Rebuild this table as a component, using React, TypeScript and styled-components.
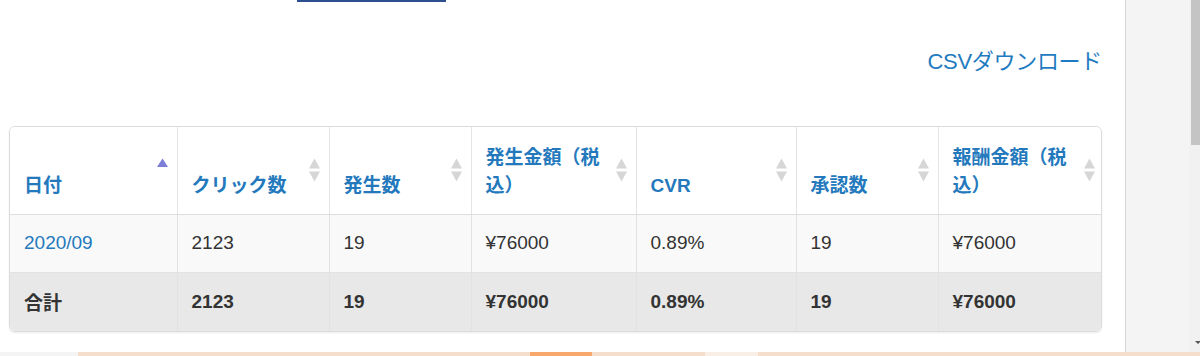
import React from "react";
import styled, { createGlobalStyle } from "styled-components";

const GlobalStyle = createGlobalStyle`
  html, body {
    margin: 0;
    padding: 0;
    background: #ffffff;
    overflow: hidden;
  }
  body {
    font-family: "Liberation Sans", Arial, "Noto Sans CJK JP", sans-serif;
    color: #333333;
  }
`;

const Page = styled.div`
  width: 1200px;
  height: 356px;
  display: flex;
  flex-direction: column;
`;

const Upper = styled.div`
  flex: 1;
  display: flex;
  min-height: 0;
`;

const Main = styled.div`
  width: 1126px;
  box-sizing: border-box;
  border-right: 1px solid #d6d6d6;
  padding: 0 23px 0 9px;
  display: flex;
  flex-direction: column;
`;

const TabLine = styled.div`
  margin-left: 288px;
  width: 149px;
  height: 2px;
  background: #2c4f8f;
`;

const CsvRow = styled.div`
  display: flex;
  justify-content: flex-end;
  margin-top: 43px;
  height: 28px;
  align-items: center;
`;

const CsvLink = styled.a`
  font-family: "Liberation Sans", Arial, "Noto Sans CJK JP", sans-serif;
  font-size: 22px;
  color: #1f7bc1;
  text-decoration: none;
  letter-spacing: -0.3px;
`;

const TableBox = styled.div`
  margin-top: 53px;
  border: 1px solid #dcdcdc;
  border-radius: 6px;
  overflow: hidden;
  box-shadow: 0 1px 2px rgba(0, 0, 0, 0.08);
`;

const Table = styled.table`
  width: 100%;
  table-layout: fixed;
  border-collapse: collapse;
`;

const Th = styled.th`
  position: relative;
  height: 87px;
  box-sizing: border-box;
  padding: 0 32px 14px 14px;
  text-align: left;
  vertical-align: bottom;
  font-family: "Liberation Sans", Arial, "Noto Sans CJK JP", sans-serif;
  font-size: 19px;
  line-height: 28px;
  font-weight: bold;
  color: #2479bd;
  background: #ffffff;
  border-left: 1px solid #e4e4e4;
  border-bottom: 1px solid #dedede;
  &:first-child {
    border-left: none;
  }
`;

const SortIcon = styled.svg`
  position: absolute;
  right: 8px;
  top: 50%;
  margin-top: -12px;
`;

const Td = styled.td<{ $total?: boolean }>`
  height: ${(p) => (p.$total ? 59 : 58)}px;
  box-sizing: border-box;
  padding: 0 14px;
  vertical-align: middle;
  font-family: "Liberation Sans", Arial, "Noto Sans CJK JP", sans-serif;
  font-size: 19px;
  font-weight: ${(p) => (p.$total ? "bold" : "normal")};
  color: #333333;
  background: ${(p) => (p.$total ? "#e8e8e8" : "#f9f9f9")};
  border-left: 1px solid #e2e2e2;
  border-top: 1px solid #e2e2e2;
  &:first-child {
    border-left: none;
  }
`;

const DateLink = styled.a`
  color: #2479bd;
  text-decoration: none;
`;

const Side = styled.div`
  width: 63px;
  background: #f4f4f4;
`;

const Scrollbar = styled.div`
  width: 11px;
  background: #f1f1f1;
  display: flex;
  flex-direction: column;
`;

const Thumb = styled.div`
  height: 145px;
  margin-left: 2px;
  background: #c4c4c4;
`;

const ScrollArrow = styled.div`
  margin-top: auto;
  margin-bottom: 8px;
  margin-left: 6px;
  width: 0;
  height: 0;
  border-left: 3px solid transparent;
  border-right: 3px solid transparent;
  border-top: 3px solid #555;
`;

const Strip = styled.div`
  height: 4px;
  display: flex;
`;

const StripPart = styled.div<{ $w: number; $c: string }>`
  width: ${(p) => p.$w}px;
  background: ${(p) => p.$c};
  flex-shrink: 0;
`;

const Sortable = ({ active }: { active?: boolean }) =>
  active ? (
    <SortIcon width="13" height="24" viewBox="0 0 13 24">
      <path d="M1 9 L6.5 0.5 L12 9 Z" fill="#7b7fd8" />
    </SortIcon>
  ) : (
    <SortIcon width="13" height="24" viewBox="0 0 13 24">
      <path d="M1 10.5 L6.5 0.5 L12 10.5 Z" fill="#d6d6d6" />
      <path d="M1 13.5 L6.5 23.5 L12 13.5 Z" fill="#d6d6d6" />
    </SortIcon>
  );

const columns = [
  { label: "日付", width: 167, active: true },
  { label: "クリック数", width: 152 },
  { label: "発生数", width: 142 },
  { label: "発生金額（税込）", width: 165 },
  { label: "CVR", width: 160 },
  { label: "承認数", width: 142 },
  { label: "報酬金額（税込）", width: 166 },
];

const rows = [["2123", "19", "¥76000", "0.89%", "19", "¥76000"]];
const total = ["2123", "19", "¥76000", "0.89%", "19", "¥76000"];

const App = () => {
  return (
    <Page>
      <GlobalStyle />
      <Upper>
        <Main>
          <TabLine />
          <CsvRow>
            <CsvLink href="#">CSVダウンロード</CsvLink>
          </CsvRow>
          <TableBox>
            <Table>
              <colgroup>
                {columns.map((c) => (
                  <col key={c.label} style={{ width: c.width }} />
                ))}
              </colgroup>
              <thead>
                <tr>
                  {columns.map((c) => (
                    <Th key={c.label}>
                      {c.label}
                      <Sortable active={c.active} />
                    </Th>
                  ))}
                </tr>
              </thead>
              <tbody>
                {rows.map((r, i) => (
                  <tr key={i}>
                    <Td>
                      <DateLink href="#">2020/09</DateLink>
                    </Td>
                    {r.map((v, j) => (
                      <Td key={j}>{v}</Td>
                    ))}
                  </tr>
                ))}
                <tr>
                  <Td $total>合計</Td>
                  {total.map((v, j) => (
                    <Td key={j} $total>
                      {v}
                    </Td>
                  ))}
                </tr>
              </tbody>
            </Table>
          </TableBox>
        </Main>
        <Side />
        <Scrollbar>
          <Thumb />
          <ScrollArrow />
        </Scrollbar>
      </Upper>
      <Strip>
        <StripPart $w={78} $c="#f4f4f4" />
        <StripPart $w={452} $c="#f5dfcc" />
        <StripPart $w={62} $c="#f8a86c" />
        <StripPart $w={113} $c="#f5dfcc" />
        <StripPart $w={53} $c="#faefe6" />
        <StripPart $w={442} $c="#f5dfcc" />
      </Strip>
    </Page>
  );
};

export default App;
